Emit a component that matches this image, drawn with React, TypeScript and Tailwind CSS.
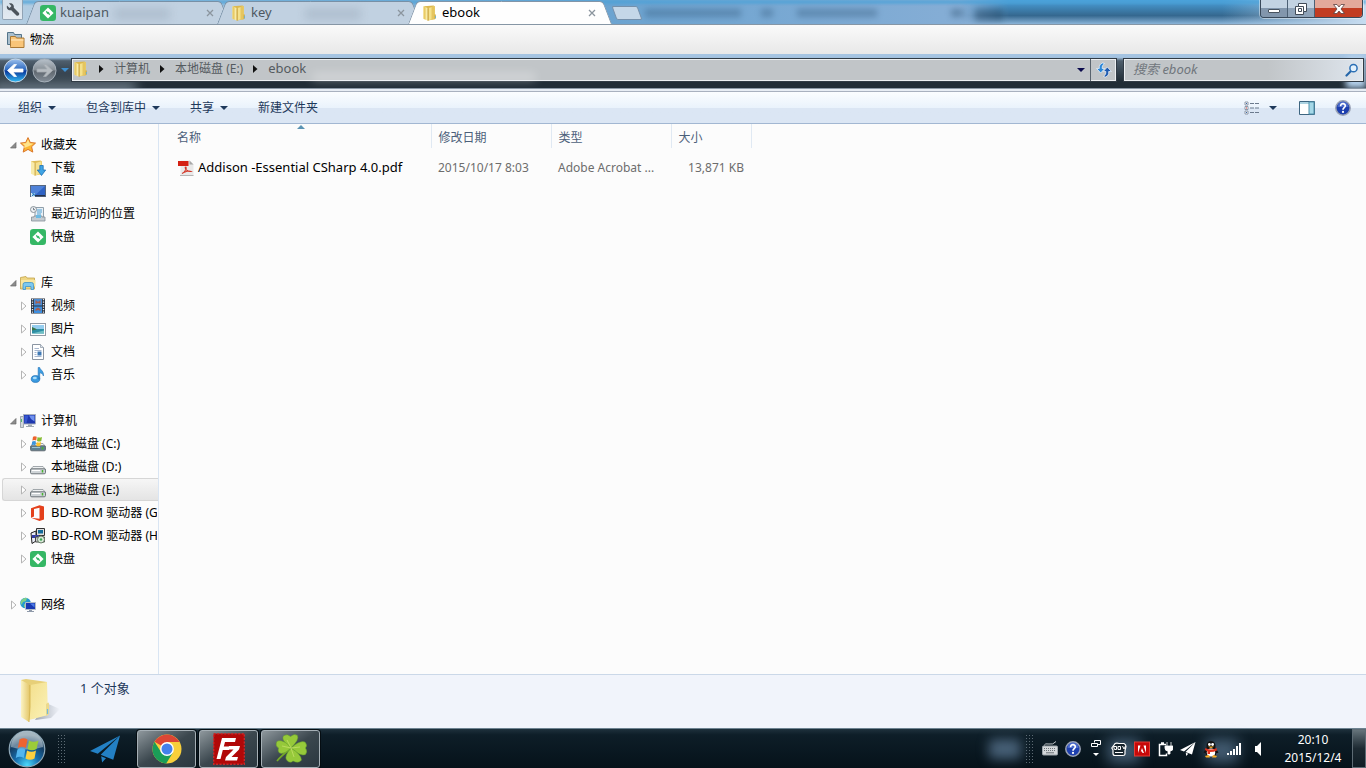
import React from "react";

type IconProps = { className?: string };

function Folder({ className = "h-4 w-4" }: IconProps) {
  return (
    <svg viewBox="0 0 16 16" className={className} aria-hidden="true">
      <path d="M2 1.200 11.500.500 13 1.500v12.800L6 15.500z" fill="#dcb84e" />
      <path d="M6.500 3 12.500 1.200v12.600L6.500 15.200z" fill="#f4e18c" />
      <path d="M9.500 2.100 12.500 1.200v12.600l-3 .7z" fill="#e5c55f" />
      <path d="M1.500 1.300 6 3.200v12.500L1.500 13.800z" fill="#f9eba6" />
      <path d="M1.500 1.300 3.600 2.200v12.500l-2.100-.9z" fill="#e9cb65" />
      <path d="M6 3.200v12.500" stroke="#b98f2c" strokeWidth=".8" />
      <path d="M12.500 9.500h1.300v4l-1.300.5z" fill="#d0a940" />
      <path d="M13 11h.8v2.200H13z" fill="#5fb0dd" />
    </svg>
  );
}

function Kuaipan({ className = "h-4 w-4" }: IconProps) {
  return (
    <svg viewBox="0 0 16 16" className={className} aria-hidden="true">
      <rect width="16" height="16" rx="3.2" fill="#35b765" />
      <path d="M8 2.400 13.600 8 8 13.600 2.400 8z" fill="#fff" />
      <path d="M5.600 5.600 10 8.300 7.600 7.900 7.400 9.600zM10.400 10.400 6 7.700l2.400.4.200-1.700z" fill="#35b765" />
    </svg>
  );
}

function Star() {
  return (
    <svg viewBox="0 0 16 16" className="h-4 w-4" aria-hidden="true">
      <path d="m8 .6 2.300 4.900 5.200.6-3.900 3.600 1.200 5.400L8 12.400l-4.800 2.700 1.200-5.400L.5 6.100l5.200-.6z" fill="#fdb734" stroke="#d9762a" />
      <path d="m8 2.400 1.700 3.900 3.800.5L8 9.500 4 11l.8-2.500-2.600-2 3.900-.3z" fill="#ffe48e" />
    </svg>
  );
}

function Downloads() {
  return (
    <svg viewBox="0 0 16 16" className="h-4 w-4" aria-hidden="true">
      <path d="M1 1.200 10.500.500 12 1.500v12.800L5 15.500z" fill="#dfbd58" />
      <path d="M5.500 3 11.500 1.200v12.600L5.500 15.200z" fill="#f4e191" />
      <path d="M1 1.300 5 3.200v12.500L1 13.800z" fill="#f8ebaa" />
      <path d="M5 3.200v12.500" stroke="#c39a36" strokeWidth=".7" />
      <path d="M9.800 5.500h3.400V10h2.500L11.500 15.500 7.300 10h2.500z" fill="#3fa4e4" stroke="#1d6fb4" strokeWidth=".8" />
    </svg>
  );
}

function Desktop() {
  return (
    <svg viewBox="0 0 16 16" className="h-4 w-4" aria-hidden="true">
      <rect x=".5" y="2.500" width="15" height="11" fill="#2f63c4" stroke="#56677f" />
      <path d="M1 3h14L6 11.500H1z" fill="#4f82d8" />
      <path d="M1 12h14v1.200H1z" fill="#24324a" />
      <path d="M1 10h4v4H1z" fill="#d7ecfa" />
      <path d="m1.800 13.200 2.400-2.400M4.200 13v-2.200H2" stroke="#2379bd" fill="none" />
    </svg>
  );
}

function Recent() {
  return (
    <svg viewBox="0 0 16 16" className="h-4 w-4" aria-hidden="true">
      <path d="M5 1.500h8.500v10H5z" fill="#e8eff5" stroke="#8f9faa" />
      <path d="M7 4h5M7 6h5M7 8h4" stroke="#4fa0d2" />
      <path d="M1.500 11h2.500v-1h8v1h3v4h-13.500z" fill="#c4cbd1" stroke="#858f97" strokeWidth=".8" />
      <path d="M6 9h5v3H6z" fill="#6dbbe3" />
      <circle cx="3.500" cy="3.500" r="3" fill="#eef1f4" stroke="#808a92" strokeWidth=".9" />
      <path d="M3.500 1.800v1.900h1.500" stroke="#55616b" strokeWidth=".8" fill="none" />
    </svg>
  );
}

function Libraries() {
  return (
    <svg viewBox="0 0 16 16" className="h-4 w-4" aria-hidden="true">
      <path d="M.5 2.500 6 1.500l1 1.500h7.500v11H.500z" fill="#efd683" stroke="#c2a249" strokeWidth=".8" />
      <path d="M1 5h14.500v6.500H1z" fill="#f7e6a2" />
      <path d="M3 14.500V9.500q0-2 2-2h6.500q2 0 2 2v5h-2.500v-3h-5.500v3z" fill="#7cc8f0" stroke="#3f93c8" strokeWidth=".8" />
    </svg>
  );
}

function Video() {
  return (
    <svg viewBox="0 0 16 16" className="h-4 w-4" aria-hidden="true">
      <rect x="1" y=".5" width="14" height="15" fill="#2b3340" />
      <path d="M4 1h8v6.500H4z" fill="#4a8cd4" />
      <path d="M4 8.500h8V15H4z" fill="#3d8fe0" />
      <path d="m5.500 2 2.500 2 2.500-2v4L8 5 5.500 6zM5.500 13v-2L8 9.500l2.500 1.500v2L8 12z" fill="#a75f50" />
      <path d="M2.500 1v14M13.500 1v14" stroke="#e6edf5" strokeWidth="1.300" strokeDasharray="1.300 1.200" />
    </svg>
  );
}

function Picture() {
  return (
    <svg viewBox="0 0 16 16" className="h-4 w-4" aria-hidden="true">
      <rect x=".5" y="2.500" width="15" height="12" fill="#fff" stroke="#929ba5" />
      <path d="M2 4h12v4.500H2z" fill="#95cdef" />
      <path d="M2 8h12v4.500H2z" fill="#2e8fa5" />
      <path d="M2 6q3 1 5 2.500L2 9.500z" fill="#39754a" />
      <path d="M6 11.500 14 9.500v3H2z" fill="#70c0c5" />
    </svg>
  );
}

function Document() {
  return (
    <svg viewBox="0 0 16 16" className="h-4 w-4" aria-hidden="true">
      <path d="M2.500.500h8l3 3v12h-11z" fill="#fff" stroke="#8b95a2" />
      <path d="M10.500.500v3h3" fill="#dce4ec" stroke="#8b95a2" strokeWidth=".7" />
      <path d="M4.500 4.500H9M4.500 6.500h7M4.500 8.500h2M4.500 10.500h2M4.500 12.500h7" stroke="#a8b7ce" />
      <path d="M7.500 7.500h4v4h-4z" fill="#3f79b5" />
    </svg>
  );
}

function Music() {
  return (
    <svg viewBox="0 0 16 16" className="h-4 w-4" aria-hidden="true">
      <ellipse cx="5.500" cy="12" rx="4.300" ry="3.400" fill="#3b9be0" stroke="#1f6eb5" strokeWidth=".7" />
      <path d="M8.200.500h1.500c.5 2.500 4.500 3.500 3.700 8.500-.5-2-1.700-3-3.700-3.200V12H8.200z" fill="#3d9ee2" stroke="#1f6eb5" strokeWidth=".6" />
      <ellipse cx="4.800" cy="11" rx="2" ry="1.200" fill="#a8dcfa" />
    </svg>
  );
}

function Computer() {
  return (
    <svg viewBox="0 0 16 16" className="h-4 w-4" aria-hidden="true">
      <path d="M.500 3.500h3v11h-3z" fill="#d2d8dd" stroke="#8e979f" strokeWidth=".8" />
      <path d="M1.500 6v3" stroke="#51b86a" />
      <path d="M3.500 1.500h12v9.500h-12z" fill="#1e37ae" stroke="#a7afbd" />
      <path d="M4.500 2.500h4l-2 7.500h-2z" fill="#3656cf" />
      <path d="M9 2.500h5.500v6L11 6z" fill="#6f91ee" />
      <path d="M8 11.500h4v1.500h2v1H6v-1h2z" fill="#a1aab2" />
    </svg>
  );
}

function Drive({ system = false }: { system?: boolean }) {
  return (
    <svg viewBox="0 0 16 16" className="h-4 w-4" aria-hidden="true">
      <path d="m3 7.500-2.500 3h15l-2.500-3z" fill="#eef0f1" stroke="#8d9499" strokeWidth=".8" />
      <rect x=".500" y="9.800" width="15" height="5" rx="1.300" fill={system ? "#5d7f90" : "#cfd4d7"} stroke="#5e666c" strokeWidth=".9" />
      <path d="M2 11.500h8" stroke={system ? "#9cc3d3" : "#fff"} />
      <path d="M12.500 11v2.500" stroke="#46b22e" strokeWidth="1.500" />
      {system && (
        <g>
          <path d="M3 .800q2-1 3.800 0L6.200 4.600q-2-1-3.800 0z" fill="#ed632d" />
          <path d="M7.600 1.100q2 1 4.400 0L11.300 5q-2 1-4.300 0z" fill="#86bc31" />
          <path d="M2.200 5.400q2-1 3.800 0l-.6 3.800q-2-1-3.800 0z" fill="#3b95dc" />
          <path d="M6.800 5.900q2 1 4.300 0L10.400 9.700q-2 1-4.200 0z" fill="#fbc22d" />
        </g>
      )}
    </svg>
  );
}

function Office() {
  return (
    <svg viewBox="0 0 16 16" className="h-4 w-4" aria-hidden="true">
      <path d="m1 3.200 8.500-3 4.500 1.300v13L9.500 16 1 12.800l8.500 1V2.700L4 4v7.500l-3 1.300z" fill="#e4401b" />
    </svg>
  );
}

function Installer() {
  return (
    <svg viewBox="0 0 16 16" className="h-4 w-4" aria-hidden="true">
      <path d="M6.500.500h8v7h-8z" fill="#ddd" stroke="#333" />
      <path d="M8 2h5v3.500H8z" fill="#126a9a" />
      <path d="m1 5 5-2v10l-4 2.500z" fill="#e8ebf5" stroke="#222" />
      <path d="M2 7h3v3H2zM5 7h4v3H6z" fill="#323da6" />
      <path d="M5.500 9h9v5h-9z" fill="#c9cbcb" stroke="#444" />
      <circle cx="11" cy="11.500" r="3.500" fill="#d9e8d8" stroke="#667b67" />
      <circle cx="11" cy="11.500" r="1.200" fill="#38a653" />
    </svg>
  );
}

function Network() {
  return (
    <svg viewBox="0 0 16 16" className="h-4 w-4" aria-hidden="true">
      <circle cx="5.500" cy="6" r="5.300" fill="#249bd0" />
      <path d="M2 2.500Q5 0 7 1L6 4 3 5 1.500 8 .500 5zM4 7l3 1-1 3-2-1z" fill="#7fd08a" />
      <path d="M5.500 5.500h10v7h-10z" fill="#183ab2" stroke="#b3bdc9" />
      <path d="M10 6.500h4.500v4z" fill="#4d7be7" />
      <path d="M9 13h3v1h2v1H7v-1h2z" fill="#8f9aaa" />
    </svg>
  );
}

function Pdf() {
  return (
    <svg viewBox="0 0 16 16" className="h-4 w-4 shrink-0" aria-hidden="true">
      <path d="M2.500.500h9l4 4v11h-13z" fill="#e9e9e9" />
      <path d="M11.500.500v4h4z" fill="#a8a8a8" />
      <path d="M2 15.500h13.500" stroke="#b5b5b5" />
      <path d="M0 1h10.500v5H0z" fill="#d42013" />
      <path d="M7.500 7c2 0-.5 5.500-3.500 6.500M7.500 7c-1 1 1.500 5 5.500 4.500-2-1-4.500-.2-6.500.8" fill="none" stroke="#d33627" strokeWidth="1.100" />
    </svg>
  );
}

function Caret({ className = "text-[#1e395b]" }: IconProps) {
  return (
    <svg viewBox="0 0 8 4" className={`h-1 w-2 shrink-0 ${className}`} aria-hidden="true">
      <path d="M0 0h8L4 4z" fill="currentColor" />
    </svg>
  );
}

function Crumb() {
  return (
    <svg viewBox="0 0 5 8" className="h-2 w-[5px] shrink-0" aria-hidden="true">
      <path d="M0 0v8l4.500-4z" fill="#111" />
    </svg>
  );
}

function Tab({ title, icon, active = false }: { title: string; icon: React.ReactNode; active?: boolean }) {
  const face = active ? "bg-[#fefefe] border-[#8295a8]" : "bg-[#c1d1e1] border-[#7890a6]";
  return (
    <div className={`relative -ml-[13px] h-6 w-[204px] shrink-0 ${active ? "z-20" : "z-10"}`}>
      <span className={`absolute top-px bottom-0 left-0 w-1/2 origin-bottom-left -skew-x-[21deg] rounded-tl border-t border-l ${face}`} />
      <span className={`absolute top-px right-0 bottom-0 w-1/2 origin-bottom-right skew-x-[21deg] rounded-tr border-t border-r ${face}`} />
      <span className={`absolute inset-x-8 top-[2px] bottom-0 ${active ? "bg-[#fefefe]" : "bg-[#c1d1e1]"}`} />
      {!active && <span className="absolute top-2 left-[88px] h-3 w-14 bg-[#9fb0c0]/50 blur-[4px]" />}
      <div className="relative flex h-full items-center pt-[2px] pr-4 pl-[14px]">
        {icon}
        <button className={`ml-1 flex-1 text-left text-[13px] ${active ? "text-black" : "text-[#4e5861]"}`}>{title}</button>
        <button aria-label={`关闭 ${title}`} className="text-[#8b959e]">
          <svg viewBox="0 0 8 8" className="h-2 w-2">
            <path d="m1 1 6 6m0-6L1 7" stroke="currentColor" strokeWidth="1.300" />
          </svg>
        </button>
      </div>
    </div>
  );
}

function TabStrip() {
  return (
    <header className="relative flex h-6 overflow-hidden bg-linear-to-b from-[#4aa2dd] via-[#35688f] via-65% to-[#8ab4d8]">
      <div className="absolute inset-y-0 left-0 w-[1010px] bg-linear-to-r from-[#b5cee2] via-[#6ba3d0] via-60% to-[#89afd6] mask-r-from-95%" />
      <div className="absolute inset-y-0 right-0 w-36 bg-linear-to-r from-transparent to-[#c7dcf0]" />
      <div className="absolute inset-x-0 top-0 h-1 bg-[#4ca3d8]/70 blur-[1px]" />
      <div className="absolute top-[9px] left-[645px] flex text-xs opacity-40 blur-[3px]" aria-hidden="true">
        <span className="h-2 w-24 bg-[#33597c]" />
        <span className="ml-5 h-2 w-3 bg-[#33597c]" />
        <span className="ml-6 h-2 w-20 bg-[#33597c]" />
        <span className="ml-[74px] h-2 w-3 bg-[#234867]" />
        <span className="ml-3 h-3 w-7 bg-[#163a58]" />
      </div>
      <button aria-label="设置" className="relative ml-[2px] flex h-5 w-[21px] shrink-0 items-center justify-center rounded-b-[2px] border border-t-0 border-[#91a3b4] bg-linear-to-b from-[#d5e0ea] to-[#e3eaf1]">
        <svg viewBox="0 0 16 16" className="h-4 w-4">
          <path d="M2 3.500 4.500 6 6.500 4 4 1.500C6.500.500 9.500 2.500 8.800 5.800L14 11c1 1.500-.800 3.500-2.500 2.500L6.200 8.200C3.500 9 1 6.500 2 3.500z" fill="#4c545c" />
        </svg>
      </button>
      <div className="ml-4 flex">
        <Tab title="kuaipan" icon={<Kuaipan className="h-4 w-4 shrink-0" />} />
        <Tab title="key" icon={<Folder className="h-4 w-4 shrink-0" />} />
        <Tab title="ebook" icon={<Folder className="h-4 w-4 shrink-0" />} active />
      </div>
      <button aria-label="新建标签页" className="relative mt-[6px] ml-[2px] h-[14px] w-[26px] skew-x-[20deg] rounded-[2px] border border-[#7590ab] bg-[#c5d7e8]" />
      <div className="absolute top-0 right-[3px] flex h-[18px] w-[103px] overflow-hidden rounded-b border border-t-0 border-[#39495a] shadow-[0_0_0_1px_#ffffff70]">
        <button aria-label="最小化" className="flex flex-1 items-center justify-center border-r border-[#4c6074] bg-linear-to-b from-[#c3d3e2] from-50% to-[#8296ac] to-50%">
          <span className="mt-1 h-1 w-3 rounded-[1px] border border-[#48535f] bg-white" />
        </button>
        <button aria-label="还原" className="flex flex-1 items-center justify-center border-r border-[#4c6074] bg-linear-to-b from-[#c3d3e2] from-50% to-[#8fa3b8] to-50%">
          <svg viewBox="0 0 12 12" className="h-3 w-3">
            <path d="M3.500.500h8v8h-3v3h-8v-8h3z" fill="#fff" stroke="#414b57" />
            <path d="M3.500 3.500h5v5M3.500 5.500h3v3h-3z" fill="none" stroke="#414b57" />
          </svg>
        </button>
        <button aria-label="关闭" className="flex w-[47px] items-center justify-center bg-linear-to-b from-[#e3a99b] from-45% to-[#c23c22] to-50%">
          <svg viewBox="0 0 12 10" className="h-[10px] w-3">
            <path d="M.500.500h3.500l2 2.500 2-2.500h3.500L8 5l3.500 4.500H8L6 7 4 9.500H.500L4 5z" fill="#fff" stroke="#5c4040" strokeWidth=".8" />
          </svg>
        </button>
      </div>
    </header>
  );
}

function AddressBar() {
  return (
    <div className="relative flex h-[35px] items-start overflow-hidden border-b border-[#8b98a6] bg-linear-to-b from-[#a5c4e2] from-10% via-[#4f5f6d] via-20% to-[#212d37] to-80%">
      <div className="absolute -bottom-3 -left-2 h-5 w-36 bg-[#bfd0df]/40 blur-[6px]" />
      <div className="absolute right-0 bottom-0 h-8 w-5 bg-[#b7d3ee] blur-[3px]" />
      <div className="relative flex h-8 w-[71px] shrink-0 items-center gap-1 pl-[3px]">
        <button aria-label="后退">
          <svg viewBox="0 0 25 25" className="h-[25px] w-[25px]">
            <defs>
              <linearGradient id="back" x1="0" y1="0" x2="0" y2="1">
                <stop offset="0" stopColor="#9cc1ee" />
                <stop offset=".48" stopColor="#2865bd" />
                <stop offset=".52" stopColor="#0a369a" />
                <stop offset="1" stopColor="#31bcf5" />
              </linearGradient>
            </defs>
            <circle cx="12.500" cy="12.500" r="11.500" fill="url(#back)" stroke="#c5d6e6" />
            <path d="m4.500 12.500 6.500-6h2.500l-3.500 4.500H20v3h-10l3.500 4.500H11z" fill="#fff" stroke="#fff" strokeWidth=".8" />
          </svg>
        </button>
        <button aria-label="前进">
          <svg viewBox="0 0 25 25" className="h-[25px] w-[25px]">
            <defs>
              <linearGradient id="forward" x1="0" y1="0" x2="0" y2="1">
                <stop offset="0" stopColor="#b8c2cb" />
                <stop offset=".48" stopColor="#868e95" />
                <stop offset=".52" stopColor="#5f676f" />
                <stop offset="1" stopColor="#848e98" />
              </linearGradient>
            </defs>
            <circle cx="12.500" cy="12.500" r="11.500" fill="url(#forward)" stroke="#a6b0ba" />
            <path d="m20.500 12.500-6.500-6h-2.500l3.500 4.500H5v3h10l-3.500 4.500H14z" fill="#b6bcc1" stroke="#a4abb1" strokeWidth=".8" />
          </svg>
        </button>
        <button aria-label="最近浏览的页面"><Caret className="text-[#3f8fd0]" /></button>
      </div>
      <div className="relative mt-1 flex h-6 min-w-0 flex-1 items-stretch border border-[#313b45] bg-[#c1c5c8] shadow-[inset_0_0_0_1px_#eceff2]">
        <span className="absolute bottom-0 left-[240px] h-2 w-56 rounded bg-white/30 blur-[5px]" />
        <nav aria-label="地址" className="relative flex flex-1 items-center gap-[10px] pb-[2px] pl-px text-xs whitespace-nowrap text-[#555b60]">
          <Folder />
          <Crumb />
          <a href="#computer">计算机</a>
          <Crumb />
          <a href="#drive-e">本地磁盘 (E:)</a>
          <Crumb />
          <a href="#ebook" className="text-[13px]">ebook</a>
        </nav>
        <button aria-label="以前的位置" className="px-[5px]"><Caret className="text-[#0b0b4d]" /></button>
        <button aria-label="刷新" className="flex w-[26px] items-center justify-center border-l border-[#59636d]">
          <svg viewBox="0 0 16 16" className="h-4 w-4">
            <path d="M6.500 1C4 2 3 3.500 3.300 6.500H.600L4.700 11l4-4.500H6.200C6 4.500 6.500 3 8.500 1.500z" fill="#2b87d8" stroke="#f2f8ff" strokeWidth=".7" />
            <path d="M9.500 15c2.500-1 3.500-2.500 3.200-5.500h2.700L11.300 5l-4 4.500h2.500c.2 2-.3 3.500-2.300 5z" fill="#1f5bb0" stroke="#f2f8ff" strokeWidth=".7" />
          </svg>
        </button>
      </div>
      <label className="relative mt-1 mr-[2px] ml-[6px] flex h-6 w-[241px] shrink-0 items-center border border-[#313b45] bg-linear-to-r from-[#c1c5c8] from-60% to-[#dfe6ee] pr-1 pl-[9px] shadow-[inset_0_0_0_1px_#eceff2]">
        <input type="search" aria-label="搜索 ebook" placeholder="搜索 ebook" className="min-w-0 flex-1 bg-transparent text-[13px] italic outline-none placeholder:text-[#70767c]" />
        <svg viewBox="0 0 14 14" className="h-[14px] w-[14px]" aria-hidden="true">
          <path d="m1.500 12.500 4-4" stroke="#2465a9" strokeWidth="2.200" strokeLinecap="round" />
          <circle cx="8.500" cy="5.200" r="3.600" fill="#e3f1fc" stroke="#2b6fb5" strokeWidth="1.500" />
        </svg>
      </label>
    </div>
  );
}

function Toolbar() {
  return (
    <div className="flex h-[33px] items-center border-y border-t-[#a9b1bf] border-b-[#a2b7d2] bg-linear-to-b from-[#fbfdff] via-[#eaf3fc] via-50% to-[#dbe6f4] to-52% pr-[15px] pl-[18px] text-xs text-[#1e395b]">
      <button className="flex items-center gap-[6px]">组织 <Caret /></button>
      <button className="ml-[30px] flex items-center gap-[6px]">包含到库中 <Caret /></button>
      <button className="ml-[30px] flex items-center gap-[6px]">共享 <Caret /></button>
      <button className="ml-[30px]">新建文件夹</button>
      <div className="ml-auto flex items-center">
        <button aria-label="更改您的视图">
          <svg viewBox="0 0 16 14" className="h-[14px] w-4">
            <path d="M1 1h3v3H1zm0 4.500h3v3H1zM1 10h3v3H1z" fill="#fff" stroke="#788394" strokeWidth=".8" />
            <path d="M2 2.500h1M2 11.500h1" stroke="#3465a4" />
            <path d="M2 7h1" stroke="#c33" />
            <path d="M6 2.500h4m1 0h4M6 7h4m1 0h4m-9 4.500h4m1 0h4" stroke="#6b7a8d" />
          </svg>
        </button>
        <button aria-label="更多选项" className="ml-[9px] flex h-4 items-center"><Caret /></button>
        <button aria-label="显示预览窗格" className="ml-[22px]">
          <svg viewBox="0 0 16 14" className="h-[14px] w-4">
            <path d="M.500.500h15v13H.500z" fill="#fff" stroke="#3d6580" />
            <path d="M1 2h9" stroke="#5aa7c4" />
            <path d="M10 1h5v12h-5z" fill="#a5d8e8" stroke="#4e91ab" />
          </svg>
        </button>
        <button aria-label="获取帮助" className="ml-5"><Help /></button>
      </div>
    </div>
  );
}

function Help() {
  return (
    <svg viewBox="0 0 16 16" className="h-4 w-4" aria-hidden="true">
      <circle cx="8" cy="8" r="7.200" fill="#1d3fae" stroke="#9aa2b4" strokeWidth="1.500" />
      <path d="M2.500 7a5.500 5.500 0 0 1 11 0z" fill="#6c8be0" opacity=".55" />
      <path d="M5.600 6.200C5.600 2.600 10.600 3 10.300 6c-.2 1.700-2.300 1.600-2.300 3.700" fill="none" stroke="#fff" strokeWidth="1.700" />
      <circle cx="8" cy="11.900" r="1.100" fill="#fff" />
    </svg>
  );
}

type Item = { label: string; prefix?: string; icon: React.ReactNode; leaf?: boolean; selected?: boolean };
type Group = Item & { items: Item[] };

const groups: Group[] = [
  {
    label: "收藏夹",
    icon: <Star />,
    items: [
      { label: "下载", icon: <Downloads />, leaf: true },
      { label: "桌面", icon: <Desktop />, leaf: true },
      { label: "最近访问的位置", icon: <Recent />, leaf: true },
      { label: "快盘", icon: <Kuaipan />, leaf: true },
    ],
  },
  {
    label: "库",
    icon: <Libraries />,
    items: [
      { label: "视频", icon: <Video /> },
      { label: "图片", icon: <Picture /> },
      { label: "文档", icon: <Document /> },
      { label: "音乐", icon: <Music /> },
    ],
  },
  {
    label: "计算机",
    icon: <Computer />,
    items: [
      { label: "本地磁盘 (C:)", icon: <Drive system /> },
      { label: "本地磁盘 (D:)", icon: <Drive /> },
      { label: "本地磁盘 (E:)", icon: <Drive />, selected: true },
      { prefix: "BD-ROM", label: " 驱动器 (G:)", icon: <Office /> },
      { prefix: "BD-ROM", label: " 驱动器 (H:)", icon: <Installer /> },
      { label: "快盘", icon: <Kuaipan /> },
    ],
  },
  { label: "网络", icon: <Network />, items: [] },
];

function Twisty({ open, hidden }: { open?: boolean; hidden?: boolean }) {
  return (
    <svg viewBox="0 0 8 10" className="h-[10px] w-2 shrink-0" aria-hidden="true">
      {!hidden && (open ? <path d="M7 2.500V8H1.500z" fill="#8c8c8c" stroke="#696969" strokeWidth=".7" /> : <path d="M2.500 1v8L7 5z" fill="#fff" stroke="#b4b4b4" />)}
    </svg>
  );
}

function Row({ item, child }: { item: Item & { open?: boolean }; child?: boolean }) {
  return (
    <a
      href={`#${item.label.trim()}`}
      className={`ml-[2px] flex h-[23px] items-center overflow-hidden border whitespace-nowrap ${child ? "pl-[16px]" : "pl-[6px]"} ${
        item.selected ? "rounded-l-[3px] border-r-0 border-[#d6d6d6] bg-linear-to-b from-[#f6f6f6] to-[#e4e4e4]" : "border-transparent"
      }`}
    >
      <Twisty open={item.open} hidden={item.leaf} />
      <span className="ml-[3px] shrink-0">{item.icon}</span>
      <span className="ml-[5px] whitespace-pre">
        {item.prefix && <span className="text-[13px]">{item.prefix}</span>}
        {item.label}
      </span>
    </a>
  );
}

function Sidebar() {
  return (
    <nav aria-label="导航窗格" className="w-[159px] shrink-0 border-r border-[#d9e5f3] pt-[9px] text-xs text-black">
      <ul className="flex flex-col gap-[23px]">
        {groups.map((g) => (
          <li key={g.label}>
            <Row item={{ ...g, open: g.items.length > 0 }} />
            {g.items.length > 0 && (
              <ul>
                {g.items.map((i) => (
                  <li key={i.label}><Row item={i} child /></li>
                ))}
              </ul>
            )}
          </li>
        ))}
      </ul>
    </nav>
  );
}

function Files() {
  return (
    <section className="min-w-0 flex-1 pl-3">
      <table className="w-[580px] table-fixed border-collapse text-left text-xs text-[#6d6d6d]">
        <colgroup>
          <col className="w-[260px]" />
          <col className="w-[120px]" />
          <col className="w-[120px]" />
          <col className="w-[80px]" />
        </colgroup>
        <thead>
          <tr className="h-6 text-[#4c607a]">
            <th className="relative border-r border-[#e0e9f3] pt-[3px] pl-[6px] font-normal">
              名称
              <svg viewBox="0 0 8 4" className="absolute top-px left-[126px] h-1 w-2" aria-hidden="true">
                <path d="M4 0 8 4H0z" fill="#5b93b3" />
              </svg>
            </th>
            <th className="border-r border-[#e0e9f3] pt-[3px] pl-[7px] font-normal">修改日期</th>
            <th className="border-r border-[#e0e9f3] pt-[3px] pl-[7px] font-normal">类型</th>
            <th className="border-r border-[#e0e9f3] pt-[3px] pl-[7px] font-normal">大小</th>
          </tr>
        </thead>
        <tbody>
          <tr className="h-10">
            <td className="pl-[7px] text-[13px] text-black">
              <span className="flex items-center gap-1"><Pdf />Addison -Essential CSharp 4.0.pdf</span>
            </td>
            <td className="pl-[7px] whitespace-nowrap">2015/10/17 8:03</td>
            <td className="pl-[7px] whitespace-nowrap">Adobe Acrobat ...</td>
            <td className="pr-[7px] text-right whitespace-nowrap">13,871 KB</td>
          </tr>
        </tbody>
      </table>
    </section>
  );
}

function Status() {
  return (
    <footer className="flex h-[54px] items-start border-t border-[#cbd8e8] bg-[#f1f4fb] pl-[18px] text-[13px] text-[#1e395b]">
      <svg viewBox="0 0 44 48" className="mt-[2px] h-12 w-11" aria-hidden="true">
        <defs>
          <linearGradient id="bigFolder" x1="0" y1="0" x2="1" y2="1">
            <stop offset="0" stopColor="#f3df8c" />
            <stop offset="1" stopColor="#fbf2b8" />
          </linearGradient>
          <linearGradient id="flap" x1="0" y1="0" x2="1" y2="0">
            <stop offset="0" stopColor="#fbf3c4" />
            <stop offset="1" stopColor="#e3c566" />
          </linearGradient>
          <linearGradient id="shade" x1="0" y1="0" x2="1" y2="0">
            <stop offset="0" stopColor="#8d95a0" stopOpacity=".8" />
            <stop offset="1" stopColor="#8d95a0" stopOpacity="0" />
          </linearGradient>
        </defs>
        <path d="m28 26 14 6-9 9-16 2z" fill="url(#shade)" />
        <path d="M3 3 8 2l21 3v33l-16 4-10-3z" fill="#e7cf78" />
        <path d="M12 8 29 5l1 33-19 5z" fill="url(#bigFolder)" />
        <path d="m3 3 9 5v22l-1 15-8-5z" fill="url(#flap)" />
        <path d="M12 8v22l-1 15" stroke="#cfae4a" strokeWidth=".8" fill="none" />
        <path d="M28 27q3-3 3 0v10l-3 2z" fill="#ecd98c" />
        <path d="M29.500 32v5" stroke="#6fbbe0" strokeWidth="1.200" />
      </svg>
      <p className="ml-[18px] pt-1">1 个对象</p>
    </footer>
  );
}

function Plane({ className = "" }: IconProps) {
  return (
    <svg viewBox="0 0 32 28" className={className} aria-hidden="true">
      <path d="M31 0 0 16l8 3zM31 0 11 20l13 5zM11.500 21.500l5 2-4 4.500z" fill="currentColor" />
    </svg>
  );
}

function Grip() {
  return <span className="h-[30px] w-[9px] shrink-0 bg-[radial-gradient(circle,#5d6b74,transparent_1px)] bg-[size:3px_3px]" />;
}

function TaskButton({ label, children }: { label: string; children: React.ReactNode }) {
  return (
    <button aria-label={label} className="flex h-[38px] w-[59px] items-center justify-center rounded-[3px] border border-[#a6b0b6] bg-linear-to-br from-[#8f989d] via-[#3b474e] via-50% to-[#2b3840] shadow-[0_0_0_1px_#050d12]">
      {children}
    </button>
  );
}

function Taskbar() {
  return (
    <footer className="relative flex h-10 items-center border-t border-[#6d8290] bg-linear-to-b from-[#1f323d] via-[#0e1e28] via-15% to-[#06121a] text-white">
      <button aria-label="开始" className="ml-2 shrink-0">
        <svg viewBox="0 0 38 38" className="h-[38px] w-[38px]">
          <defs>
            <radialGradient id="orb" cx=".5" cy=".95" r=".85">
              <stop offset="0" stopColor="#4dd9fb" />
              <stop offset=".4" stopColor="#176fae" />
              <stop offset=".75" stopColor="#153e63" />
              <stop offset="1" stopColor="#7d929f" />
            </radialGradient>
          </defs>
          <circle cx="19" cy="19" r="17.800" fill="url(#orb)" stroke="#8fa9b8" strokeWidth="1.200" />
          <path d="M3 17a16 16 0 0 1 32 0q-16 5-32 0z" fill="#d7e3e9" opacity=".45" />
          <path d="M11.500 9.500q4-2.500 8 0l-1.700 8.500q-4-2.500-8 0z" fill="#ed6430" />
          <path d="M21 10.500q4.500 2.500 9.500 0l-2 8.500q-4.500 2.500-9 0z" fill="#9bcc38" />
          <path d="M9.400 19.500q4-2.500 8 0l-1.600 8.500q-4-2.500-8 0z" fill="#53b6ee" />
          <path d="M19 20.500q4.500 2.500 9 0L26.500 28.500q-4.500 2.500-9 0z" fill="#fed03f" />
        </svg>
      </button>
      <span className="ml-[11px] flex"><Grip /></span>
      <button aria-label="Telegram" className="ml-6 text-[#2380c4]"><Plane className="h-7 w-[31px]" /></button>
      <div className="ml-4 flex gap-[3px]">
        <TaskButton label="Chrome">
          <svg viewBox="0 0 30 30" className="h-[30px] w-[30px]">
            <circle cx="15" cy="15" r="14.500" fill="#f8cf3b" />
            <path d="M15 15 2.500 7.700A14.500 14.500 0 0 1 27.600 8H15z" fill="#dc4635" />
            <path d="M2.500 7.700A14.500 14.500 0 0 0 14.200 29.500l6.800-11-12-.5z" fill="#1b9d58" />
            <circle cx="15" cy="15" r="6.900" fill="#fff" />
            <circle cx="15" cy="15" r="5.500" fill="#4381ec" />
          </svg>
        </TaskButton>
        <TaskButton label="FileZilla">
          <svg viewBox="0 0 32 32" className="h-8 w-8">
            <rect x=".7" y=".7" width="30.600" height="30.600" fill="#b10808" stroke="#c92a2a" strokeWidth="1.400" strokeDasharray="2 1.500" />
            <path d="M9 5h14l-1 4H12l-1.200 4.500H17l-1 3.500H9.800L7.500 26H3.500z" fill="#fff" />
            <path d="M16 13h11l-1 3.500-7.500 7.500H25l-1 3.500H12l1-3.500 7.500-7.500H15z" fill="#fff" />
          </svg>
        </TaskButton>
        <TaskButton label="四叶草">
          <svg viewBox="0 0 32 32" className="h-8 w-8">
            <path d="M15 16Q6 23 2 28" fill="none" stroke="#74a926" strokeWidth="1.600" />
            <g fill="#96c93a" stroke="#5f982c" strokeWidth=".5">
              <path d="M16 15C9 10 6 5 9 2.500q3.500-2 6.500 1 4-3.500 7-1 2 4-6.500 12.500z" />
              <path d="M16 15C11 8 4 6 1.500 9q-1.500 4 2 6-1.500 5 3 5.500 4 0 9.500-5.500z" />
              <path d="M16 15q9-8 14-6 3 3.500.5 6 2.500 3.500 0 6.500-5 2.500-14.500-6.500z" />
              <path d="M16 15Q9 23 11.500 27q3.500 4 6.500 1 6 3 8.500-1 0-5.500-10.500-12z" />
            </g>
            <path d="m16 15-4-8m4 8L7 13m9 2 9-1m-9 1 3 9" stroke="#c3e068" strokeWidth=".8" fill="none" />
          </svg>
        </TaskButton>
      </div>
      <div className="ml-auto flex h-full items-center">
        <span className="mr-1 h-5 w-8 rounded bg-[#56728c]/80 blur-[6px]" aria-hidden="true" />
        <Grip />
        <div className="relative mr-[9px] ml-2 flex items-center gap-[7px]">
          <span className="absolute top-0 left-[66px] h-6 w-8 bg-[#6887a5]/60 blur-[7px]" />
          <span className="absolute top-0 left-[164px] h-6 w-8 bg-[#6887a5]/60 blur-[7px]" />
          <svg viewBox="0 0 16 16" className="relative h-4 w-4" aria-hidden="true">
            <path d="M2 4.500Q3 2 7 3t7-2.500" fill="none" stroke="#bfc5c9" />
            <rect x=".5" y="5" width="15" height="9" rx="1" fill="#d4d8db" stroke="#9ba3a9" />
            <path d="M2 7.500h12M2 9.500h12" stroke="#6b7378" strokeDasharray="1 1" />
            <path d="M4 11.800h8" stroke="#6b7378" />
          </svg>
          <Help />
          <svg viewBox="0 0 16 20" className="relative h-5 w-4" aria-hidden="true">
            <path d="M6.500 3.500v-2h6v4h-3M3.500 4.500h6v3h-6z" fill="none" stroke="#fff" />
            <path d="M5 14h6l-3 3z" fill="#fff" />
          </svg>
          <svg viewBox="0 0 16 16" className="relative h-4 w-4" aria-hidden="true">
            <path d="M3 4Q4 1.500 8 2.500h5q2 1 2 3l-1 4v3.500q0 1.500-2 1.500H4q-2 0-2-2V9L.800 7z" fill="#16242d" stroke="#fff" strokeWidth="1.200" />
            <path d="M2.500 5.500h3v3h-2zM7 5.500h2.500v3H7zM11.500 5l1.500 3m1.500-3L13 8M4 11.500h8" fill="none" stroke="#fff" />
          </svg>
          <svg viewBox="0 0 16 16" className="relative h-4 w-4" aria-hidden="true">
            <rect x=".5" y="1" width="15" height="14" fill="#c70909" stroke="#e23c34" />
            <path d="M4 12V4.500h2.500zM12 12V4.500H9.500zM8 7l2 5H8.500L8 10.500H6.800z" fill="#fff" />
          </svg>
          <svg viewBox="0 0 16 16" className="relative h-4 w-4" aria-hidden="true">
            <path d="M9 3.500H2.500v11h7v-2M4 2h3" fill="none" stroke="#fff" strokeWidth="1.500" />
            <path d="M10 1v4m4-4v4M8 5h8v2q0 3-3 3v3h-2v-3Q8 10 8 7z" fill="#fff" stroke="#fff" strokeWidth=".8" />
          </svg>
          <Plane className="relative h-[14px] w-4" />
          <svg viewBox="0 0 16 18" className="relative h-[18px] w-4" aria-hidden="true">
            <path d="M3.500 8Q3 1 8 1t4.500 7l3 4.500-2.500 1 0 2H3v-2l-2.500-1z" fill="#121212" />
            <ellipse cx="8" cy="12.500" rx="4.200" ry="4" fill="#fff" />
            <path d="M2.500 8q5.500 3 11 0l.5 2.500q-3 1.500-7 1.500v2H4.500v-2.500L2 10z" fill="#dd321e" />
            <circle cx="6.400" cy="4.500" r="1.400" fill="#fff" /><circle cx="9.600" cy="4.500" r="1.400" fill="#fff" />
            <path d="M5 6.500h6l-3 1.700zM2 16l4-1 1 2.500H3zm12 0-4-1-1 2.500h4z" fill="#f8ad25" />
          </svg>
          <svg viewBox="0 0 16 14" className="relative h-[14px] w-4" aria-hidden="true">
            <path d="M1 11h2v2H1zm3-2h2v4H4zm3-2h2v6H7zm3-3h2v9h-2zm3-3h2v12h-2z" fill="#fff" />
          </svg>
          <svg viewBox="0 0 16 16" className="relative h-4 w-4" aria-hidden="true">
            <path d="M6 5h2l4-4v14l-4-4H6z" fill="#fff" />
          </svg>
        </div>
        <time className="flex w-[78px] flex-col text-center text-xs leading-[18px]">
          <span>20:10</span>
          <span>2015/12/4</span>
        </time>
        <button aria-label="显示桌面" className="h-full w-[14px] border border-[#5d6b74] bg-linear-to-b from-[#66747b] via-[#1d2a32] via-50% to-[#101d25]" />
      </div>
    </footer>
  );
}

export default function App() {
  return (
    <div className="flex min-h-screen flex-col bg-[#fcfcfc] font-['Noto_Sans','Noto_Sans_CJK_SC',sans-serif]">
      <TabStrip />
      <div className="flex h-[30px] items-center gap-[5px] border-t border-[#8696a5] bg-linear-to-b from-[#fafafa] to-[#e8e8e8] pl-[7px] text-xs">
        <svg viewBox="0 0 18 16" className="h-4 w-[18px]" aria-hidden="true">
          <path d="M.500 12.500v-12h6l1 2h7v10z" fill="#aabfcd" stroke="#54748a" />
          <path d="M3.500 14.500V4.500h5l1 1.500h7.500v9.500H3.500z" fill="#f9c579" stroke="#a97835" />
          <path d="M4 8h12.500" stroke="#ffebc6" />
        </svg>
        <a href="#logistics">物流</a>
      </div>
      <AddressBar />
      <div className="h-[2px] bg-[#e8edf4]" />
      <Toolbar />
      <main className="flex flex-1">
        <Sidebar />
        <Files />
      </main>
      <Status />
      <Taskbar />
    </div>
  );
}
